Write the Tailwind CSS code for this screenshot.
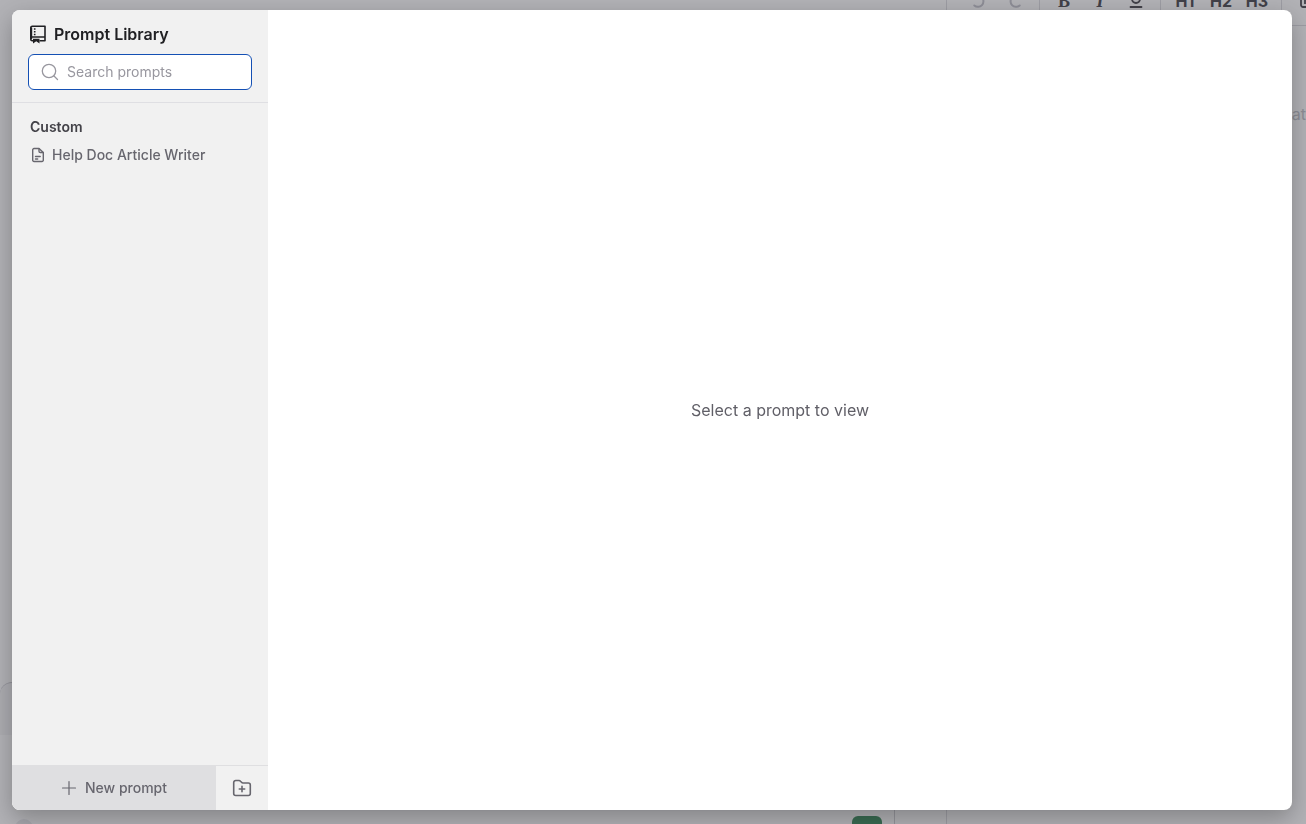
<!DOCTYPE html>
<html lang="en">
<head>
    <meta charset="UTF-8">
    <meta name="viewport" content="width=device-width, initial-scale=1.0">
    <title>Prompt Library</title>
    <script src="https://cdn.jsdelivr.net/npm/@tailwindcss/browser@4"></script>
    <style>
        body { font-family: Inter, "Liberation Sans", sans-serif; }
    </style>
</head>
<body class="h-screen overflow-hidden bg-white">

    <!-- App behind the dialog -->
    <div class="flex h-full" inert>
        <section class="flex w-[895px] shrink-0 flex-col justify-end overflow-hidden">
            <div class="h-[53px] shrink-0 rounded-tl-xl border-t border-[#cfcfd4] bg-[#f7f7f8]"></div>
            <div class="flex h-[89px] shrink-0 items-start justify-between overflow-hidden border-r border-[#d4d4d8] pt-[81px] pr-3 pl-[15px]">
                <div class="mt-[3px] size-[18px] rounded-full bg-[#eeeef0]"></div>
                <div class="h-7 w-[30px] rounded-md bg-[#4e976d]"></div>
            </div>
        </section>

        <section class="ml-[51px] flex-1 overflow-hidden border-l border-[#e0e0e4]">
            <div class="-mt-[26px] flex h-[52px] items-center overflow-hidden border-b border-[#e0e0e4] pt-[2px] pl-[14px] text-base font-bold text-[#5a595f]">
                <button class="flex w-9 shrink-0 justify-center text-[#cacad1]" aria-label="Undo">
                    <svg class="size-5" viewBox="0 0 20 20" fill="none" stroke="currentColor" stroke-width="2" stroke-linecap="round" stroke-linejoin="round"><path d="M5 2v4.500h4.500M5 6.500A5.500 5.500 0 1 1 5.300 14.500"/></svg>
                </button>
                <button class="flex w-9 shrink-0 justify-center text-[#cacad1]" aria-label="Redo">
                    <svg class="size-5" viewBox="0 0 20 20" fill="none" stroke="currentColor" stroke-width="2" stroke-linecap="round" stroke-linejoin="round"><path d="M15 2v4.500h-4.500M15 6.500A5.500 5.500 0 1 0 14.700 14.500"/></svg>
                </button>
                <span class="mx-[6px] h-full w-px shrink-0 bg-[#e0e0e4]"></span>
                <button class="w-9 shrink-0 font-[Liberation_Serif] text-lg">B</button>
                <button class="w-9 shrink-0 font-[Liberation_Serif] text-lg italic">I</button>
                <button class="flex w-9 shrink-0 justify-center" aria-label="Underline">
                    <svg class="size-5" viewBox="0 0 20 20" fill="none" stroke="currentColor" stroke-width="1.8" stroke-linecap="round"><path d="M6 1v7a4 4 0 0 0 8 0V1M4.500 16h11"/></svg>
                </button>
                <span class="mx-[6px] h-full w-px shrink-0 bg-[#e0e0e4]"></span>
                <button class="w-9 shrink-0">H1</button>
                <button class="w-9 shrink-0">H2</button>
                <button class="w-9 shrink-0">H3</button>
                <span class="mx-[6px] h-full w-px shrink-0 bg-[#e0e0e4]"></span>
                <button class="flex w-9 shrink-0 justify-center" aria-label="Columns">
                    <svg class="size-5" viewBox="0 0 20 20" fill="none" stroke="currentColor" stroke-width="1.8"><rect x="5" y="1" width="12" height="15" rx="2"/><path d="M9 2v11"/></svg>
                </button>
            </div>
            <p class="mt-[76px] text-right text-base text-[#c8cad0]">at</p>
        </section>
    </div>

    <!-- Backdrop + dialog -->
    <div class="fixed inset-0 flex bg-[#0f0e1c]/32 pt-[10px] pr-[14px] pb-[14px] pl-3">
        <div role="dialog" aria-labelledby="title" class="flex flex-1 overflow-hidden rounded-lg bg-white shadow-[0_8px_24px_rgba(0,0,0,0.28)]">

            <!-- Sidebar -->
            <aside class="flex w-64 shrink-0 flex-col bg-[#f1f1f1]">
                <header class="border-b border-[#dfdfe3] px-4 pt-3 pb-3">
                    <div class="flex h-6 items-center gap-1.5 text-[#202023]">
                        <svg class="size-5" viewBox="0 0 20 20" fill="none" stroke="currentColor" stroke-width="1.6" stroke-linejoin="round">
                            <path d="M5 16.700h-.700A1.500 1.500 0 0 1 2.800 15.200V3.800a1.500 1.500 0 0 1 1.500-1.500H17v14.400h-5.500"/>
                            <path d="M3.500 13H17"/>
                            <path d="M3.200 3.500V15" stroke-width="2"/>
                            <path d="M6.700 4.300v1.500M6.700 7v1.500M6.700 9.700v1.500" stroke-width="1.600"/>
                            <path d="M5 14.700h6.500v4.800l-3.250-2.200L5 19.500z" fill="currentColor" stroke="none"/>
                        </svg>
                        <h1 id="title" class="text-base font-semibold">Prompt Library</h1>
                    </div>
                    <label class="mt-2 flex h-9 items-center gap-2 rounded-md border border-[#1450b4] bg-white px-3 text-[#98979f]">
                        <svg class="size-[18px] shrink-0" viewBox="0 0 18 18" fill="none" stroke="currentColor" stroke-width="1.300" stroke-linecap="round"><circle cx="8" cy="8" r="6.700"/><path d="m13 13 3.500 3.500"/></svg>
                        <span class="sr-only">Search prompts</span>
                        <input type="text" placeholder="Search prompts" class="w-full min-w-0 bg-transparent text-sm text-[#202023] outline-none placeholder:text-[#98979f]">
                    </label>
                </header>

                <nav class="flex-1 px-[18px] pt-[14px]">
                    <h2 class="text-sm font-semibold text-[#434248]">Custom</h2>
                    <a href="#" class="mt-2 flex items-center gap-1.5 text-sm font-medium text-[#67666e]">
                        <svg class="size-4" viewBox="0 0 16 16" fill="none" stroke="currentColor" stroke-width="1.400" stroke-linecap="round" stroke-linejoin="round">
                            <path d="M9 1.500H4A1.300 1.300 0 0 0 2.700 2.800v10.400A1.300 1.300 0 0 0 4 14.500h8a1.300 1.300 0 0 0 1.300-1.300V5.500z"/>
                            <path d="M9 1.700V4.200a1.300 1.300 0 0 0 1.300 1.300h2.800M5.500 9.500h4.700M5.500 12h2.200"/>
                        </svg>
                        Help Doc Article Writer
                    </a>
                </nav>

                <footer class="flex h-[45px] border-t border-[#dfdfe1] text-[#67666e]">
                    <button class="flex flex-1 items-center justify-center gap-2 bg-[#dfdfe1] text-sm font-medium">
                        <svg class="size-4" viewBox="0 0 16 16" fill="none" stroke="currentColor" stroke-width="1.200" stroke-linecap="round"><path d="M8 1.500v13M1.500 8h13"/></svg>
                        New prompt
                    </button>
                    <button class="flex w-13 items-center justify-center" aria-label="New folder">
                        <svg class="size-5" viewBox="0 0 20 20" fill="none" stroke="currentColor" stroke-width="1.600" stroke-linecap="round" stroke-linejoin="round">
                            <path d="M1.700 15.500v-11a2 2 0 0 1 2-2H7a2 2 0 0 1 1.500.700l1 1.100a2 2 0 0 0 1.500.700h5.300a2 2 0 0 1 2 2v8.500a2 2 0 0 1-2 2H3.700a2 2 0 0 1-2-2z"/>
                            <path d="M10 8.300v5.400M7.300 11h5.400"/>
                        </svg>
                    </button>
                </footer>
            </aside>

            <!-- Prompt view -->
            <main class="flex flex-1 items-center justify-center">
                <p class="text-base text-[#605f67]">Select a prompt to view</p>
            </main>
        </div>
    </div>
</body>
</html>
